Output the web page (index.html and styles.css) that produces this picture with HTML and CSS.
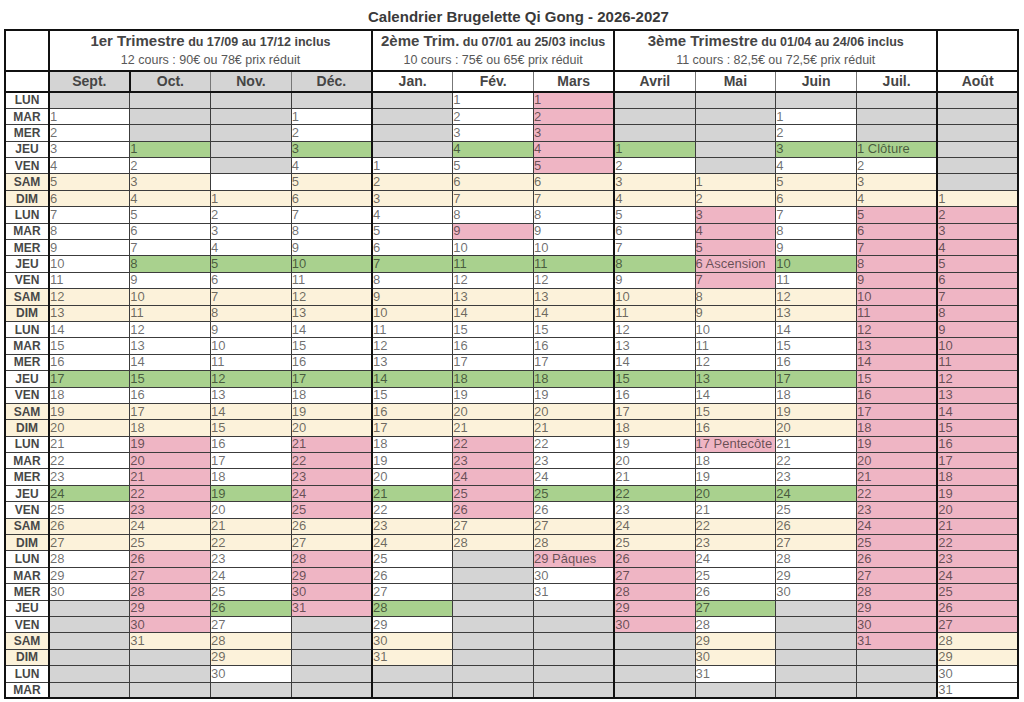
FILE: index.html
```html
<!DOCTYPE html>
<html lang="fr">
<head>
<meta charset="utf-8">
<title>Calendrier Brugelette Qi Gong - 2026-2027</title>
<link rel="stylesheet" href="styles.css">
</head>
<body>
<div class="title">Calendrier Brugelette Qi Gong - 2026-2027</div>
<table class="cal">
<colgroup><col class="c-day"><col span="12"></colgroup>
<thead>
<tr class="trim">
<td class="blank"></td>
<th colspan="4"><div class="t1"><span class="big">1er Trimestre</span> du 17/09 au 17/12 inclus</div><div class="t2">12 cours : 90€ ou 78€ prix réduit</div></th>
<th colspan="3"><div class="t1"><span class="big">2ème Trim.</span> du 07/01 au 25/03 inclus</div><div class="t2">10 cours : 75€ ou 65€ prix réduit</div></th>
<th colspan="4"><div class="t1"><span class="big">3ème Trimestre</span> du 01/04 au 24/06 inclus</div><div class="t2">11 cours : 82,5€ ou 72,5€ prix réduit</div></th>
<td class="blank"></td>
</tr>
<tr class="months">
<td class="blank"></td>
<th class="gr sep">Sept.</th><th class="gr">Oct.</th><th class="gr">Nov.</th><th class="gr">Déc.</th>
<th>Jan.</th><th>Fév.</th><th>Mars</th>
<th>Avril</th><th>Mai</th><th>Juin</th><th>Juil.</th>
<th>Août</th>
</tr>
</thead>
<tbody>
<tr><th>LUN</th><td class="e"></td><td class="e"></td><td class="e"></td><td class="e"></td><td class="e"></td><td>1</td><td class="p">1</td><td class="e"></td><td class="e"></td><td class="e"></td><td class="e"></td><td class="e"></td></tr>
<tr><th>MAR</th><td>1</td><td class="e"></td><td class="e"></td><td>1</td><td class="e"></td><td>2</td><td class="p">2</td><td class="e"></td><td class="e"></td><td>1</td><td class="e"></td><td class="e"></td></tr>
<tr><th>MER</th><td>2</td><td class="e"></td><td class="e"></td><td>2</td><td class="e"></td><td>3</td><td class="p">3</td><td class="e"></td><td class="e"></td><td>2</td><td class="e"></td><td class="e"></td></tr>
<tr><th>JEU</th><td>3</td><td class="v">1</td><td class="e"></td><td class="v">3</td><td class="e"></td><td class="v">4</td><td class="p">4</td><td class="v">1</td><td class="e"></td><td class="v">3</td><td class="v">1 Clôture</td><td class="e"></td></tr>
<tr><th>VEN</th><td>4</td><td>2</td><td class="e"></td><td>4</td><td>1</td><td>5</td><td class="p">5</td><td>2</td><td class="e"></td><td>4</td><td>2</td><td class="e"></td></tr>
<tr class="we"><th>SAM</th><td>5</td><td>3</td><td class="n"></td><td>5</td><td>2</td><td>6</td><td>6</td><td>3</td><td>1</td><td>5</td><td>3</td><td class="e"></td></tr>
<tr class="we"><th>DIM</th><td>6</td><td>4</td><td>1</td><td>6</td><td>3</td><td>7</td><td>7</td><td>4</td><td>2</td><td>6</td><td>4</td><td>1</td></tr>
<tr><th>LUN</th><td>7</td><td>5</td><td>2</td><td>7</td><td>4</td><td>8</td><td>8</td><td>5</td><td class="p">3</td><td>7</td><td class="p">5</td><td class="p">2</td></tr>
<tr><th>MAR</th><td>8</td><td>6</td><td>3</td><td>8</td><td>5</td><td class="p">9</td><td>9</td><td>6</td><td class="p">4</td><td>8</td><td class="p">6</td><td class="p">3</td></tr>
<tr><th>MER</th><td>9</td><td>7</td><td>4</td><td>9</td><td>6</td><td>10</td><td>10</td><td>7</td><td class="p">5</td><td>9</td><td class="p">7</td><td class="p">4</td></tr>
<tr><th>JEU</th><td>10</td><td class="v">8</td><td class="v">5</td><td class="v">10</td><td class="v">7</td><td class="v">11</td><td class="v">11</td><td class="v">8</td><td class="p">6 Ascension</td><td class="v">10</td><td class="p">8</td><td class="p">5</td></tr>
<tr><th>VEN</th><td>11</td><td>9</td><td>6</td><td>11</td><td>8</td><td>12</td><td>12</td><td>9</td><td class="p">7</td><td>11</td><td class="p">9</td><td class="p">6</td></tr>
<tr class="we"><th>SAM</th><td>12</td><td>10</td><td>7</td><td>12</td><td>9</td><td>13</td><td>13</td><td>10</td><td>8</td><td>12</td><td class="p">10</td><td class="p">7</td></tr>
<tr class="we"><th>DIM</th><td>13</td><td>11</td><td>8</td><td>13</td><td>10</td><td>14</td><td>14</td><td>11</td><td>9</td><td>13</td><td class="p">11</td><td class="p">8</td></tr>
<tr><th>LUN</th><td>14</td><td>12</td><td>9</td><td>14</td><td>11</td><td>15</td><td>15</td><td>12</td><td>10</td><td>14</td><td class="p">12</td><td class="p">9</td></tr>
<tr><th>MAR</th><td>15</td><td>13</td><td>10</td><td>15</td><td>12</td><td>16</td><td>16</td><td>13</td><td>11</td><td>15</td><td class="p">13</td><td class="p">10</td></tr>
<tr><th>MER</th><td>16</td><td>14</td><td>11</td><td>16</td><td>13</td><td>17</td><td>17</td><td>14</td><td>12</td><td>16</td><td class="p">14</td><td class="p">11</td></tr>
<tr><th>JEU</th><td class="v">17</td><td class="v">15</td><td class="v">12</td><td class="v">17</td><td class="v">14</td><td class="v">18</td><td class="v">18</td><td class="v">15</td><td class="v">13</td><td class="v">17</td><td class="p">15</td><td class="p">12</td></tr>
<tr><th>VEN</th><td>18</td><td>16</td><td>13</td><td>18</td><td>15</td><td>19</td><td>19</td><td>16</td><td>14</td><td>18</td><td class="p">16</td><td class="p">13</td></tr>
<tr class="we"><th>SAM</th><td>19</td><td>17</td><td>14</td><td>19</td><td>16</td><td>20</td><td>20</td><td>17</td><td>15</td><td>19</td><td class="p">17</td><td class="p">14</td></tr>
<tr class="we"><th>DIM</th><td>20</td><td>18</td><td>15</td><td>20</td><td>17</td><td>21</td><td>21</td><td>18</td><td>16</td><td>20</td><td class="p">18</td><td class="p">15</td></tr>
<tr><th>LUN</th><td>21</td><td class="p">19</td><td>16</td><td class="p">21</td><td>18</td><td class="p">22</td><td>22</td><td>19</td><td class="p">17 Pentecôte</td><td>21</td><td class="p">19</td><td class="p">16</td></tr>
<tr><th>MAR</th><td>22</td><td class="p">20</td><td>17</td><td class="p">22</td><td>19</td><td class="p">23</td><td>23</td><td>20</td><td>18</td><td>22</td><td class="p">20</td><td class="p">17</td></tr>
<tr><th>MER</th><td>23</td><td class="p">21</td><td>18</td><td class="p">23</td><td>20</td><td class="p">24</td><td>24</td><td>21</td><td>19</td><td>23</td><td class="p">21</td><td class="p">18</td></tr>
<tr><th>JEU</th><td class="v">24</td><td class="p">22</td><td class="v">19</td><td class="p">24</td><td class="v">21</td><td class="p">25</td><td class="v">25</td><td class="v">22</td><td class="v">20</td><td class="v">24</td><td class="p">22</td><td class="p">19</td></tr>
<tr><th>VEN</th><td>25</td><td class="p">23</td><td>20</td><td class="p">25</td><td>22</td><td class="p">26</td><td>26</td><td>23</td><td>21</td><td>25</td><td class="p">23</td><td class="p">20</td></tr>
<tr class="we"><th>SAM</th><td>26</td><td>24</td><td>21</td><td>26</td><td>23</td><td>27</td><td>27</td><td>24</td><td>22</td><td>26</td><td class="p">24</td><td class="p">21</td></tr>
<tr class="we"><th>DIM</th><td>27</td><td>25</td><td>22</td><td>27</td><td>24</td><td>28</td><td>28</td><td>25</td><td>23</td><td>27</td><td class="p">25</td><td class="p">22</td></tr>
<tr><th>LUN</th><td>28</td><td class="p">26</td><td>23</td><td class="p">28</td><td>25</td><td class="e"></td><td class="p">29 Pâques</td><td class="p">26</td><td>24</td><td>28</td><td class="p">26</td><td class="p">23</td></tr>
<tr><th>MAR</th><td>29</td><td class="p">27</td><td>24</td><td class="p">29</td><td>26</td><td class="e"></td><td>30</td><td class="p">27</td><td>25</td><td>29</td><td class="p">27</td><td class="p">24</td></tr>
<tr><th>MER</th><td>30</td><td class="p">28</td><td>25</td><td class="p">30</td><td>27</td><td class="e"></td><td>31</td><td class="p">28</td><td>26</td><td>30</td><td class="p">28</td><td class="p">25</td></tr>
<tr><th>JEU</th><td class="e"></td><td class="p">29</td><td class="v">26</td><td class="p">31</td><td class="v">28</td><td class="e"></td><td class="e"></td><td class="p">29</td><td class="v">27</td><td class="e"></td><td class="p">29</td><td class="p">26</td></tr>
<tr><th>VEN</th><td class="e"></td><td class="p">30</td><td>27</td><td class="e"></td><td>29</td><td class="e"></td><td class="e"></td><td class="p">30</td><td>28</td><td class="e"></td><td class="p">30</td><td class="p">27</td></tr>
<tr class="we"><th>SAM</th><td class="e"></td><td>31</td><td>28</td><td class="e"></td><td>30</td><td class="e"></td><td class="e"></td><td class="e"></td><td>29</td><td class="e"></td><td class="p">31</td><td>28</td></tr>
<tr class="we"><th>DIM</th><td class="e"></td><td class="e"></td><td>29</td><td class="e"></td><td>31</td><td class="e"></td><td class="e"></td><td class="e"></td><td>30</td><td class="e"></td><td class="e"></td><td>29</td></tr>
<tr><th>LUN</th><td class="e"></td><td class="e"></td><td>30</td><td class="e"></td><td class="e"></td><td class="e"></td><td class="e"></td><td class="e"></td><td>31</td><td class="e"></td><td class="e"></td><td>30</td></tr>
<tr><th>MAR</th><td class="e"></td><td class="e"></td><td class="e"></td><td class="e"></td><td class="e"></td><td class="e"></td><td class="e"></td><td class="e"></td><td class="e"></td><td class="e"></td><td class="e"></td><td>31</td></tr>
</tbody>
</table>
</body>
</html>
```

FILE: styles.css
```css
html, body {
  margin: 0;
  padding: 0;
  background: #ffffff;
}

body {
  padding: 0 5px 0 4px;
  font-family: "Liberation Sans", Arial, Helvetica, sans-serif;
}

.title {
  box-sizing: border-box;
  height: 29px;
  padding-top: 8px;
  padding-left: 14px;
  text-align: center;
  font-weight: bold;
  font-size: 15px;
  line-height: 17px;
  color: #3a3a3a;
}

.cal {
  border-collapse: collapse;
  table-layout: fixed;
  width: 1015px;
  border: 2px solid #111;
}

.c-day {
  width: 44px;
}

.cal td,
.cal th {
  border: 1px solid #3c3c3c;
  padding: 0;
  overflow: hidden;
  white-space: nowrap;
}

/* header rows */
.trim td,
.trim th {
  height: 39px;
  border-left: 2px solid #111;
  border-bottom: 2px solid #111;
  text-align: center;
  vertical-align: middle;
  color: #454545;
  background: #fff;
}

.t1 {
  font-weight: bold;
  font-size: 12.5px;
  line-height: 18px;
}

.t1 .big {
  font-size: 15px;
}

.t2 {
  font-weight: normal;
  font-size: 12.5px;
  line-height: 18px;
  color: #585858;
}

.months td,
.months th {
  height: 19px;
  border-bottom: 2px solid #111;
  text-align: center;
  vertical-align: middle;
  font-weight: bold;
  font-size: 14px;
  line-height: 17px;
  color: #454545;
  background: #fff;
  border-color: #777;
  border-bottom-color: #111;
}

.months th.gr {
  background: #d4d4d4;
}

.months th.sep {
  border-right: 2px solid #111;
}

/* group separators */
.months > :nth-child(2),
.months > :nth-child(6),
.months > :nth-child(9),
.months > :nth-child(13),
tbody tr > :nth-child(2),
tbody tr > :nth-child(6),
tbody tr > :nth-child(9),
tbody tr > :nth-child(13) {
  border-left: 2px solid #111;
}

/* day rows */
tbody tr {
  height: 16.4px;
}

tbody th {
  font-weight: bold;
  font-size: 12px;
  line-height: 14px;
  text-align: center;
  color: #474747;
  background: #fff;
}

tbody td {
  padding-left: 2px;
  font-size: 13px;
  line-height: 14px;
  text-align: left;
  color: rgba(0, 0, 0, 0.58);
  background: #fff;
}

tbody tr.we > * {
  background: #fcf2da;
}

tbody tr td.e {
  background: #d4d4d4;
}

tbody tr td.n {
  background: #ffffff;
}

tbody tr td.v {
  background: #a9d18e;
}

tbody tr td.p {
  background: #efb5c4;
}
```
